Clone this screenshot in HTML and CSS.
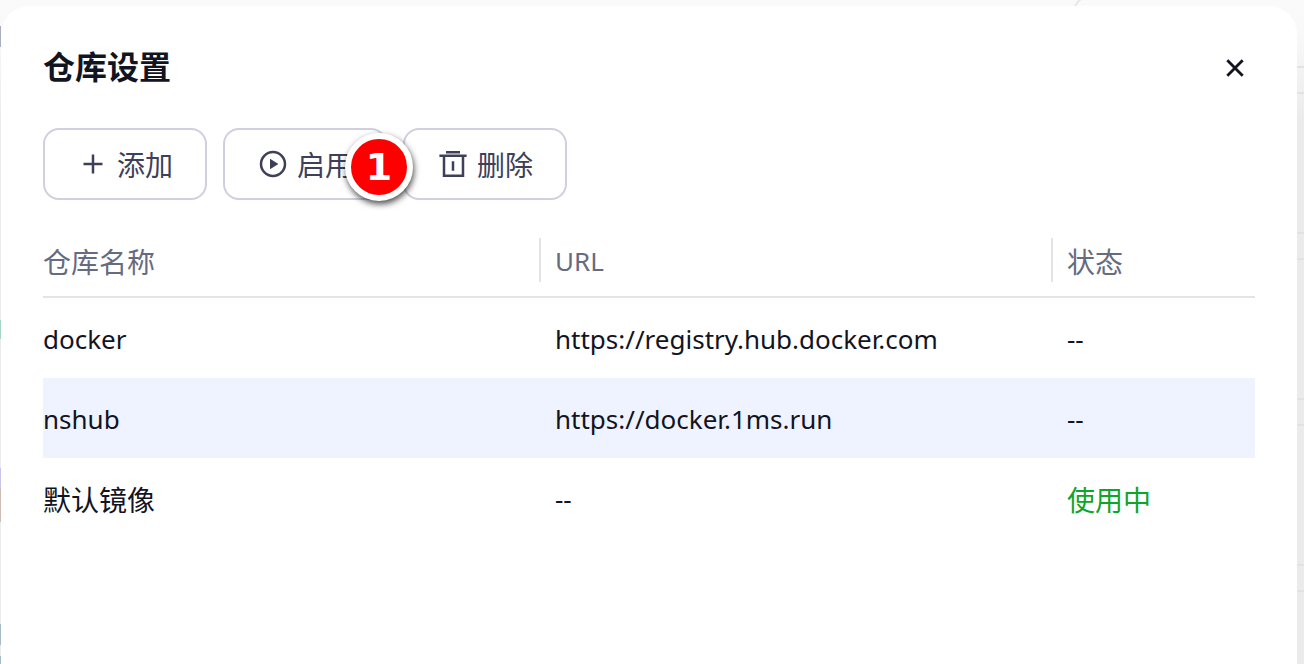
FILE: index.html
```html
<!DOCTYPE html>
<html lang="zh-CN">
<head>
    <meta charset="UTF-8">
    <meta name="viewport" content="width=device-width, initial-scale=1.0">
    <title>仓库设置</title>
    <link rel="stylesheet" href="styles.css">
</head>
<body>
    <div class="page-panel"></div>
    <div class="dialog" role="dialog" aria-labelledby="dialog-title">
        <div class="dialog-header">
            <h1 id="dialog-title">仓库设置</h1>
            <button type="button" class="close" aria-label="关闭">
                <svg width="40" height="40" viewBox="0 0 40 40"><path d="M12.3 12.3l15.4 15.4M27.7 12.3l-15.4 15.4" fill="none" stroke="currentColor" stroke-width="2.8"/></svg>
            </button>
        </div>

        <div class="toolbar">
            <button type="button" class="btn">
                <svg class="icon" viewBox="0 0 32 32"><path d="M16 6.5v19M6.5 16h19"/></svg>
                添加
            </button>
            <div class="step">
                <button type="button" class="btn">
                    <svg class="icon" viewBox="0 0 32 32"><circle cx="16" cy="16" r="12"/><path class="fill" d="M13 10.7v10.6l8.4-5.3z"/></svg>
                    启用
                </button>
                <span class="step-badge">1</span>
            </div>
            <button type="button" class="btn">
                <svg class="icon" viewBox="0 0 32 32"><path d="M9 4.2h14M2.4 7.8h27.2M7 8v19.8h19V8M16 13.2v9.6"/></svg>
                删除
            </button>
        </div>

        <table class="repos">
            <thead>
                <tr>
                    <th class="col-name"><div class="zh">仓库名称</div></th>
                    <th class="col-url"><div>URL</div></th>
                    <th class="col-status"><div class="zh">状态</div></th>
                </tr>
            </thead>
            <tbody>
                <tr>
                    <td>docker</td>
                    <td>https://registry.hub.docker.com</td>
                    <td>--</td>
                </tr>
                <tr class="selected">
                    <td>nshub</td>
                    <td>https://docker.1ms.run</td>
                    <td>--</td>
                </tr>
                <tr>
                    <td class="zh">默认镜像</td>
                    <td>--</td>
                    <td class="zh in-use">使用中</td>
                </tr>
            </tbody>
        </table>
    </div>
</body>
</html>
```
FILE: styles.css
```css
* {
    box-sizing: border-box;
}
body {
    margin: 0;
    padding: 6px 7px 0 1px;
    min-height: 100vh;
    display: flex;
    overflow: hidden;
    color: #12141f;
    font-family: "Noto Sans", "Noto Sans CJK SC", sans-serif;
    font-size: 26px;
    /* icons at the left edge, then the list rows at the right edge */
    background:
        linear-gradient(transparent 26px, #a9adbd 26px 47px, transparent 47px 320px, #a8d5c4 320px 339px, transparent 339px 468px, #c8c4ee 468px 488px, #cdbdb4 488px 522px, transparent 522px 624px, #a5bcc8 624px 645px, transparent 645px 656px, #a5bcc8 656px) left top / 1px 664px no-repeat,
        linear-gradient(transparent 66px, #e2e2e6 66px 68px, transparent 68px 92px, #e2e2e6 92px 94px, transparent 94px 166px) right top / 7px 166px repeat-y,
        linear-gradient(#fafafa, #f9f9f9 30px, #ebebeb 120px);
}
.page-panel {
    position: absolute;
    top: -4px;
    left: 1073px;
    right: 0;
    height: 40px;
    border: 2px solid #e6e6ee;
    border-right: none;
    border-bottom: none;
    border-radius: 16px 0 0 0;
}
.dialog {
    position: relative;
    flex: 1;
    padding: 42px;
    background: #fff;
    border-radius: 28px 28px 0 0;
}
.dialog-header {
    display: flex;
    justify-content: space-between;
    align-items: flex-start;
    height: 40px;
    margin-bottom: 40px;
}
h1 {
    margin: 0;
    font-family: "Noto Sans CJK SC", sans-serif;
    font-size: 32px;
    line-height: 34px;
    font-weight: bold;
}
button {
    font: inherit;
    background: none;
    cursor: pointer;
}
.close {
    width: 40px;
    height: 40px;
    padding: 0;
    border: none;
    color: #12141f;
}
.toolbar {
    display: flex;
    gap: 16px;
    margin-bottom: 24px;
}
.btn {
    display: flex;
    align-items: center;
    gap: 8px;
    height: 72px;
    padding: 0 32px;
    border: 2px solid #cfcfdf;
    border-radius: 16px;
    color: #3d4058;
    font-family: "Noto Sans CJK SC", sans-serif;
    font-size: 28px;
    white-space: nowrap;
}
.icon {
    width: 32px;
    height: 32px;
    fill: none;
    stroke: currentColor;
    stroke-width: 2.5;
}
.icon .fill {
    fill: currentColor;
    stroke: none;
}
.step {
    position: relative;
}
.step-badge {
    position: absolute;
    z-index: 1;
    top: 5px;
    left: 122px;
    width: 68px;
    height: 68px;
    border: 6px solid #fff;
    border-radius: 50%;
    background: #f00;
    box-shadow: 1px 3px 6px rgba(0, 0, 0, 0.7);
    color: #fff;
    font: bold 38px/56px "DejaVu Sans", sans-serif;
    text-align: center;
}
.repos {
    width: 100%;
    table-layout: fixed;
    border-spacing: 0;
}
.col-url {
    width: 512px;
}
.col-status {
    width: 204px;
}
th {
    padding: 14px 0;
    border-bottom: 2px solid #e4e4e4;
    color: #676b80;
    font-weight: normal;
    text-align: left;
}
th div {
    height: 44px;
    line-height: 46px;
}
th + th div {
    padding-left: 14px;
    border-left: 2px solid #e4e4e4;
}
td {
    height: 80px;
    padding: 2px 0 0;
    line-height: 40px;
}
td + td {
    padding-left: 16px;
}
.zh {
    font-family: "Noto Sans CJK SC", sans-serif;
    font-size: 28px;
}
.selected {
    background: #eff3ff;
}
.in-use {
    color: #0fa42a;
}
```
